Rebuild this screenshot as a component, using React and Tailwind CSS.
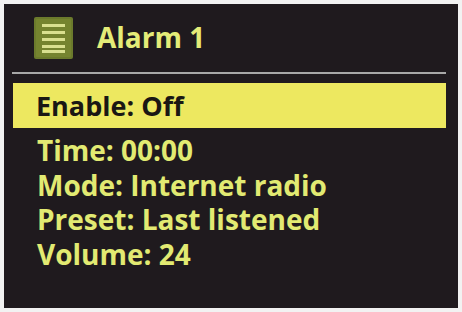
import React from "react";

function MenuIcon() {
  return (
    <svg width="39" height="42" viewBox="0 0 39 42" className="block">
      <rect x="0" y="0" width="39" height="42" rx="2" fill="#6b7a2c" />
      <rect x="2" y="2" width="35" height="38" rx="1" fill="#75842f" />
      <rect x="8" y="7" width="23" height="3" fill="#d9e08f" />
      <rect x="8" y="14" width="23" height="3" fill="#d9e08f" />
      <rect x="8" y="21" width="23" height="3" fill="#d9e08f" />
      <rect x="8" y="28" width="23" height="3" fill="#d9e08f" />
      <rect x="8" y="33" width="23" height="3" fill="#d9e08f" />
    </svg>
  );
}

export default function App() {
  const font = { fontFamily: '"Open Sans", "Noto Sans", sans-serif' };
  return (
    <div className="w-[462px] h-[312px] bg-[#f2f2f2] pt-[4px] pl-[4px]" style={font}>
      <div className="w-[454px] h-[304px] bg-[#1f1a1e] flex flex-col">
        <div className="flex items-center h-[68px] pl-[30px]">
          <MenuIcon />
          <span className="ml-[24px] text-[28px] font-bold leading-none text-[#e4ec78] -mt-[2px]">Alarm 1</span>
        </div>
        <div className="ml-[8px] w-[434px] h-[2px] bg-[#a8a8a8]"></div>
        <div className="ml-[9px] mt-[9px] w-[433px] h-[45px] bg-[#ede860] flex items-center pl-[23px]">
          <span className="text-[27px] font-bold leading-none text-[#1a1714]">Enable: Off</span>
        </div>
        <div className="flex flex-col pl-[33px] pt-[5px] text-[28px] font-bold leading-[34.6px] text-[#e2ea72]">
          <span>Time: 00:00</span>
          <span>Mode: Internet radio</span>
          <span>Preset: Last listened</span>
          <span>Volume: 24</span>
        </div>
      </div>
    </div>
  );
}
